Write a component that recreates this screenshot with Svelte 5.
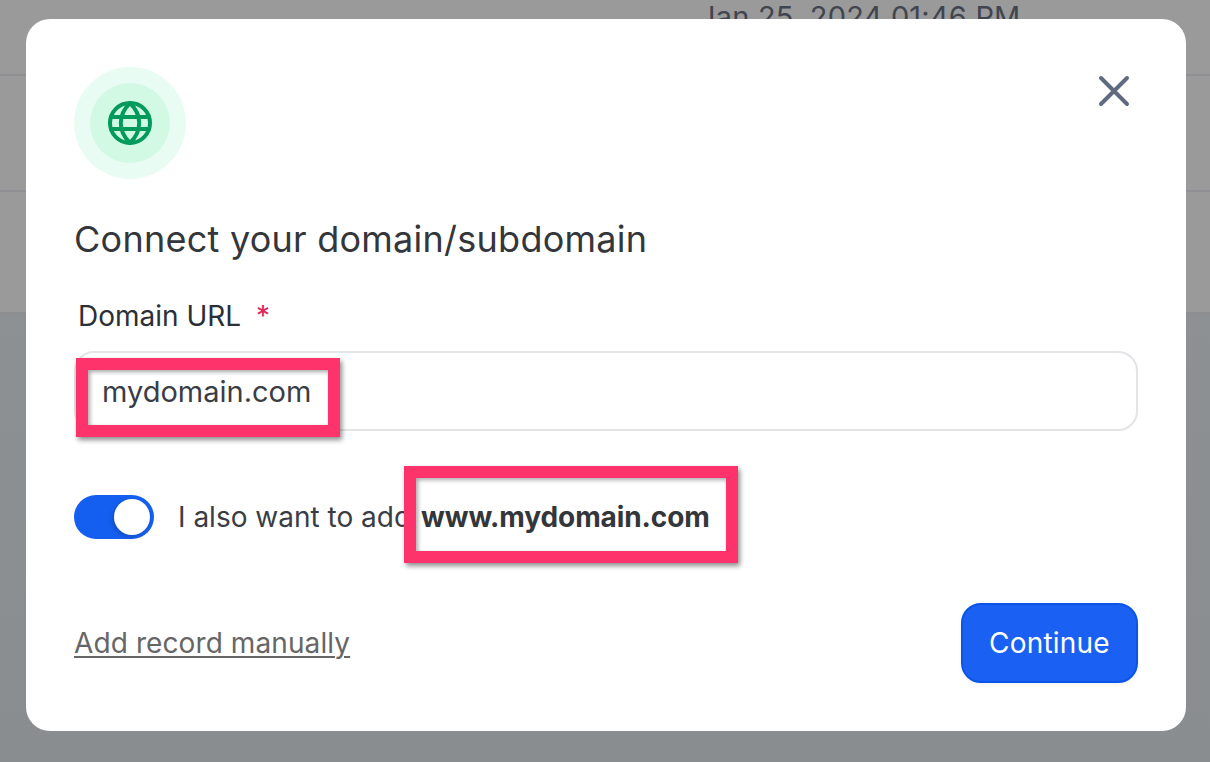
<script>
  let domain = $state("mydomain.com");
  let addWww = $state(true);
</script>

<div class="page">
  <div class="rows">
    <div class="row first"><span class="date">Jan 25, 2024 01:46 PM</span></div>
    <div class="row second"></div>
    <div class="row third"></div>
  </div>

  <div class="overlay">
    <div class="modal">
      <div class="top">
        <div class="halo">
          <div class="halo-inner">
            <svg width="48" height="48" viewBox="0 0 24 24" fill="none" stroke="#009b5a" stroke-width="2" stroke-linecap="round" stroke-linejoin="round">
              <circle cx="12" cy="12" r="10" />
              <path d="M2.6 9h18.8M2.6 15h18.8" />
              <path d="M12 2c-2.9 2.8-4.6 6.200-4.600 10s1.700 7.200 4.600 10c2.900-2.800 4.600-6.200 4.600-10S14.900 4.800 12 2z" />
            </svg>
          </div>
        </div>
        <button class="close" type="button" aria-label="Close">
          <svg width="32" height="32" viewBox="0 0 32 32" fill="none" stroke="#5f6b80" stroke-width="4" stroke-linecap="round">
            <path d="M3 3l26 26M29 3L3 29" />
          </svg>
        </button>
      </div>

      <h2>Connect your domain/subdomain</h2>

      <label class="field">
        <span class="label">Domain URL <em>*</em></span>
        <input type="text" bind:value={domain} />
      </label>

      <div class="toggle-row">
        <button class="toggle" class:on={addWww} type="button" aria-label="Toggle www" onclick={() => (addWww = !addWww)}>
          <span class="knob"></span>
        </button>
        <span class="toggle-text">I also want to add <strong>www.{domain}</strong></span>
      </div>

      <div class="actions">
        <a href="#manual">Add record manually</a>
        <button class="primary" type="button">Continue</button>
      </div>
    </div>
  </div>

  <div class="mark mark-input"></div>
  <div class="mark mark-www"></div>
</div>

<style>
  :global(body) {
    margin: 0;
    font-family: Inter, "Liberation Sans", sans-serif;
  }

  .page {
    position: relative;
    width: 1210px;
    height: 762px;
    overflow: hidden;
    background: linear-gradient(#909396, #8a8d8f);
  }

  .rows {
    background: #9a9a9a;
    border-bottom: 3px solid #8d8e90;
    height: 315px;
    box-sizing: border-box;
  }

  .row {
    border-bottom: 2px solid #8f8f93;
    box-sizing: border-box;
  }

  .row.first {
    height: 76px;
    padding: 0 0 0 699px;
    overflow: hidden;
  }

  .row.second {
    height: 116px;
  }

  .row.third {
    border-bottom: 0;
  }

  .date {
    display: block;
    margin-top: 1px;
    font-size: 29px;
    line-height: 32px;
    letter-spacing: 0.2px;
    color: #40454f;
    white-space: nowrap;
  }

  .overlay {
    position: absolute;
    inset: 0;
    padding: 19px 24px 31px 26px;
    box-sizing: border-box;
  }

  .modal {
    height: 100%;
    box-sizing: border-box;
    padding: 48px;
    background: #fff;
    border-radius: 24px;
    display: flex;
    flex-direction: column;
  }

  .top {
    display: flex;
    justify-content: space-between;
    align-items: flex-start;
  }

  .halo {
    width: 112px;
    height: 112px;
    border-radius: 50%;
    background: #e9fcf3;
    display: flex;
    align-items: center;
    justify-content: center;
  }

  .halo-inner {
    width: 80px;
    height: 80px;
    border-radius: 50%;
    background: #d2f9e3;
    display: flex;
    align-items: center;
    justify-content: center;
  }

  .close {
    padding: 0;
    margin: 8px 8px 0 0;
    border: 0;
    background: none;
    width: 32px;
    height: 32px;
    display: block;
  }

  .close svg {
    display: block;
  }

  h2 {
    margin: 38px 0 0 0;
    font-size: 36px;
    line-height: 44px;
    font-weight: 400;
    letter-spacing: 0.25px;
    color: #33363b;
  }

  .field {
    display: flex;
    flex-direction: column;
    margin-top: 37px;
  }

  .label {
    margin-left: 4px;
    font-size: 28px;
    line-height: 36px;
    color: #2b2f36;
  }

  .label em {
    margin-left: 7px;
    font-style: normal;
    color: #e0245e;
  }

  input {
    margin-top: 17px;
    height: 80px;
    padding: 0 26px;
    box-sizing: border-box;
    border: 2px solid #e3e4e8;
    border-radius: 20px;
    font: 400 29px Inter, "Liberation Sans", sans-serif;
    color: #3a3d44;
    background: #fff;
    outline: none;
  }

  .toggle-row {
    display: flex;
    align-items: center;
    gap: 24px;
    margin-top: 64px;
  }

  .toggle {
    width: 80px;
    height: 44px;
    padding: 4px;
    border: 0;
    border-radius: 22px;
    background: #cfd3da;
    display: flex;
  }

  .toggle.on {
    background: #155ff0;
    justify-content: flex-end;
  }

  .knob {
    width: 36px;
    height: 36px;
    border-radius: 50%;
    background: #fff;
    box-shadow: -2px 2px 4px rgba(10, 30, 80, 0.25);
  }

  .toggle-text {
    font-size: 28px;
    line-height: 36px;
    color: #3a3d44;
  }

  strong {
    margin-left: 2px;
    font-weight: 700;
    letter-spacing: -0.1px;
    color: #33363b;
  }

  .actions {
    margin-top: auto;
    display: flex;
    justify-content: space-between;
    align-items: center;
  }

  .actions a {
    font-size: 28px;
    line-height: 36px;
    letter-spacing: 0.1px;
    color: #666;
    text-decoration: underline;
    text-decoration-thickness: 2px;
    text-underline-offset: 3px;
  }

  .primary {
    width: 177px;
    height: 80px;
    border: 2px solid #0a54e8;
    border-radius: 20px;
    background: #1a60f2;
    color: #fff;
    font: 400 28px Inter, "Liberation Sans", sans-serif;
    letter-spacing: 0.2px;
    box-shadow: 0 2px 4px rgba(16, 24, 40, 0.06);
  }

  .mark {
    position: absolute;
    box-sizing: border-box;
    border: 12px solid #ff336c;
    box-shadow: 2px 3px 5px rgba(0, 0, 0, 0.45), inset 2px 2px 4px rgba(0, 0, 0, 0.35);
  }

  .mark-input {
    left: 76px;
    top: 358px;
    width: 264px;
    height: 79px;
  }

  .mark-www {
    left: 404px;
    top: 466px;
    width: 334px;
    height: 97px;
  }
</style>
